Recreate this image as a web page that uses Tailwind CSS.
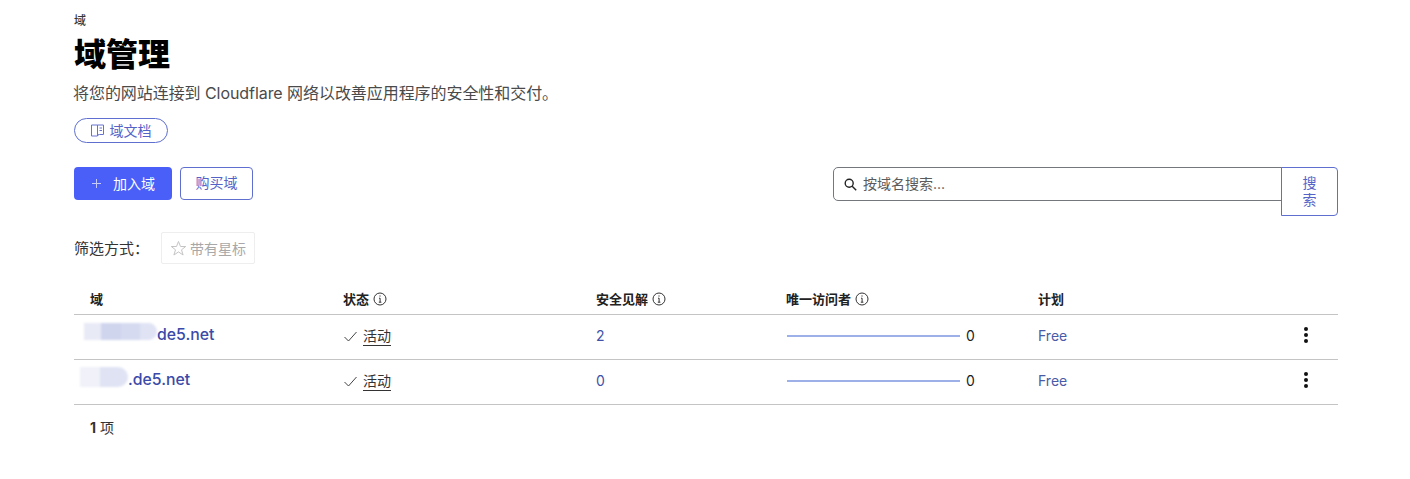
<!doctype html>
<html lang="zh"><head><meta charset="utf-8"><script src="https://cdn.jsdelivr.net/npm/@tailwindcss/browser@4"></script></head>
<body class="bg-white">
<div class="h-[479px] w-[1410px] overflow-hidden px-[74px] pr-[72px] pt-[13px] font-['Inter','Noto_Sans_CJK_SC',sans-serif] text-[#1d1d1d]">
  <div class="h-[16px] text-[12px] leading-[16px] font-medium text-[#36393a]">域</div>
  <h1 class="mt-[8px] h-[34px] text-[32px] leading-[36px] font-black text-black">域管理</h1>
  <p class="mt-[10px] h-[24px] -ml-px text-[16px] leading-[24px] tracking-[-0.06px] text-[#4a4a4a]">将您的网站连接到 Cloudflare 网络以改善应用程序的安全性和交付。</p>
  <a class="mt-[13px] flex h-[25px] w-[94px] items-center justify-center gap-[5px] rounded-full border border-[#5f6fd0] pr-px text-[14px] text-[#5563c8]">
    <svg class="h-[15px] w-[15px]" viewBox="0 0 15 15" fill="none" stroke="#6672cc" stroke-width="1"><path d="M1.5 2h6v11h-6zM7.5 2h6v9.5H9.5q-2 0-2 1.5M9.5 5h2.5M9.5 7.5h2.5"/></svg>
    <span>域文档</span>
  </a>
  <div class="mt-[24px] flex items-start justify-between">
    <div class="flex gap-[8px]">
      <button class="flex h-[33px] w-[98px] items-center rounded-[4px] bg-[#4a5ff7] pb-[1px] pl-[17px] text-[14px] text-white">
        <svg class="h-[11px] w-[11px]" viewBox="0 0 11 11" stroke="#c4cbfb" stroke-width="1"><path d="M5.5 1v9M1 5.5h9"/></svg>
        <span class="ml-[11px]">加入域</span>
      </button>
      <button class="h-[33px] w-[73px] rounded-[4px] border border-[#5f6fd0] pb-[2px] text-[14px] text-[#5563c8]">购买域</button>
    </div>
    <div class="flex items-start">
      <div class="flex h-[34px] w-[449px] items-center rounded-l-[5px] border border-[#74777c] pl-[9px] text-[14px] text-[#5b5b5b]">
        <svg class="h-[15px] w-[15px]" viewBox="0 0 15 15" fill="none" stroke="#222" stroke-width="1.4"><circle cx="6.2" cy="6.2" r="4"/><path d="M9.2 9.2l4 4"/></svg>
        <span class="ml-[5px] -mt-[2px]">按域名搜索...</span>
      </div>
      <button class="-ml-px flex h-[49px] w-[57px] items-center justify-center rounded-r-[4px] border border-[#5f6fd0] px-[20px] pb-[2px] text-[14px] leading-[17px] text-[#5563c8]">搜索</button>
    </div>
  </div>
  <div class="mt-[16px] flex items-center">
    <span class="w-[87px] pt-[2px] text-[15px] text-[#333]">筛选方式：</span>
    <div class="flex h-[32px] w-[94px] items-center justify-center gap-[3px] rounded-[2px] border border-[#eeeeee] text-[14px] text-[#a8a8a8]">
      <svg class="h-[17px] w-[17px]" viewBox="0 0 17 17" fill="none" stroke="#c4c4c4" stroke-width="1"><path d="M8.5 1.5l2 5h5.2l-4.2 3.3 1.6 5.2-4.6-3.1L3.9 15l1.6-5.2-4.2-3.3h5.2z"/></svg>
      <span>带有星标</span>
    </div>
  </div>
  <div class="mt-[24px] w-[1264px] text-[14px]">
    <div class="grid h-[27px] grid-cols-[253px_253px_190px_252px_316px] border-b border-[#c4c4c4] pt-[1px] text-[13px] leading-[20px] font-semibold text-[#222]">
      <div class="pl-[16px]">域</div>
      <div class="flex items-start gap-[4px] pl-[16px]"><span>状态</span><svg class="mt-[3px] h-[14px] w-[14px]" viewBox="0 0 14 14" fill="none" stroke="#333" stroke-width="1"><circle cx="7" cy="7" r="6"/><path d="M6 6.2h1.1v4M5.8 10.2h2.6M7 3.4v1.2"/></svg></div>
      <div class="flex items-start gap-[4px] pl-[16px]"><span>安全见解</span><svg class="mt-[3px] h-[14px] w-[14px]" viewBox="0 0 14 14" fill="none" stroke="#333" stroke-width="1"><circle cx="7" cy="7" r="6"/><path d="M6 6.2h1.1v4M5.8 10.2h2.6M7 3.4v1.2"/></svg></div>
      <div class="flex items-start gap-[4px] pl-[16px]"><span>唯一访问者</span><svg class="mt-[3px] h-[14px] w-[14px]" viewBox="0 0 14 14" fill="none" stroke="#333" stroke-width="1"><circle cx="7" cy="7" r="6"/><path d="M6 6.2h1.1v4M5.8 10.2h2.6M7 3.4v1.2"/></svg></div>
      <div class="pl-[16px]">计划</div>
    </div>
    <div class="grid h-[45px] grid-cols-[253px_253px_190px_252px_316px] items-center border-b border-[#c4c4c4] pb-[3px]">
      <div class="relative -mt-[2px] pl-[83px] text-[15.8px] font-medium text-[#3b4aa8]">de5.net
        <div class="absolute top-0 left-[10px] flex h-[17px] w-[73px] overflow-hidden rounded-r-full blur-[1px]"><div class="w-[17px] bg-[#e8eaf6]"></div><div class="w-[20px] bg-[#d0d5ee]"></div><div class="w-[19px] bg-[#d5daf0]"></div><div class="w-[17px] bg-[#dfe3f4]"></div></div>
      </div>
      <div class="flex items-center pt-[2px] pl-[16px] text-[#333]"><svg class="h-[15px] w-[15px]" viewBox="0 0 15 15" fill="none" stroke="#444" stroke-width="1"><path d="M1.5 8l4 4 8-9"/></svg><span class="ml-[5px] border-b border-[#333] leading-[18px]">活动</span></div>
      <div class="pl-[16px] text-[#3f51a8]">2</div>
      <div class="flex items-center pl-[17px]"><div class="h-[2px] w-[173px] bg-[#9db0e8]"></div><span class="ml-[6px]">0</span></div>
      <div class="flex items-center justify-between pr-[28px] pl-[16px] text-[#4a5ba6]"><span>Free</span><svg class="-mt-[2px] h-[18px] w-[8px]" viewBox="0 0 8 18" fill="#111"><circle cx="4" cy="3" r="2"/><circle cx="4" cy="9" r="2"/><circle cx="4" cy="15" r="2"/></svg></div>
    </div>
    <div class="grid h-[45px] grid-cols-[253px_253px_190px_252px_316px] items-center border-b border-[#c4c4c4] pb-[3px]">
      <div class="relative -mt-[2px] pl-[54px] text-[15.8px] font-medium text-[#3b4aa8]">.de5.net
        <div class="absolute -top-px left-[6px] flex h-[20px] w-[48px] overflow-hidden rounded-r-full blur-[1px]"><div class="w-[20px] bg-[#f0f1f9]"></div><div class="w-[28px] bg-[#e0e3f3]"></div></div>
      </div>
      <div class="flex items-center pt-[2px] pl-[16px] text-[#333]"><svg class="h-[15px] w-[15px]" viewBox="0 0 15 15" fill="none" stroke="#444" stroke-width="1"><path d="M1.5 8l4 4 8-9"/></svg><span class="ml-[5px] border-b border-[#333] leading-[18px]">活动</span></div>
      <div class="pl-[16px] text-[#3f51a8]">0</div>
      <div class="flex items-center pl-[17px]"><div class="h-[2px] w-[173px] bg-[#9db0e8]"></div><span class="ml-[6px]">0</span></div>
      <div class="flex items-center justify-between pr-[28px] pl-[16px] text-[#4a5ba6]"><span>Free</span><svg class="-mt-[2px] h-[18px] w-[8px]" viewBox="0 0 8 18" fill="#111"><circle cx="4" cy="3" r="2"/><circle cx="4" cy="9" r="2"/><circle cx="4" cy="15" r="2"/></svg></div>
    </div>
    <div class="mt-[13px] pl-[16px] text-[14px] leading-[20px] text-[#333]"><b class="font-bold">1</b> 项</div>
  </div>
</div>
</body></html>
